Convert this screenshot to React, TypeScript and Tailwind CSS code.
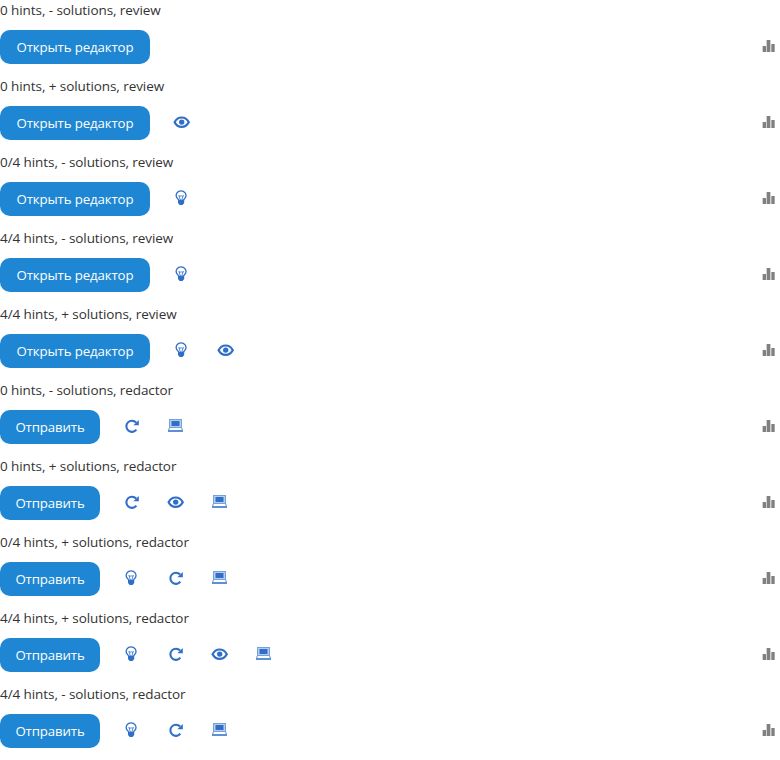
import React from "react";

type Tool = "hint" | "reset" | "solution" | "output";

function HintIcon() {
  return (
    <svg width="20" height="20" viewBox="0 0 20 20" fill="none" stroke="#306fc7">
      <path d="M6.8 11.2L4.5 8.2C3.3 5.2 5.4 1.8 9 1.8s5.9 3.4 4.7 6.4L11.4 11.2" strokeWidth="1.3" />
      <path d="M6.8 6l1.6 5M11.4 6l-1.6 5M7 6.8l1.1.6 1-.8 1 .8 1.1-.6" strokeWidth="0.8" />
      <path d="M6 10.8h6.2v3.2L10.5 16H7.7L6 14z" fill="#306fc7" stroke="none" />
    </svg>
  );
}

function SolutionIcon() {
  return (
    <svg width="20" height="20" viewBox="0 0 20 20" fill="none" stroke="#306fc7">
      <path d="M2.6 9.2C5.8 2.9 13.4 2.9 16.8 9.2C13.4 15.4 5.8 15.4 2.6 9.2z" strokeWidth="2.2" />
      <circle cx="9.7" cy="9.1" r="2.7" fill="#306fc7" stroke="none" />
    </svg>
  );
}

function ResetIcon() {
  return (
    <svg width="20" height="20" viewBox="0 0 20 20" fill="none" stroke="#306fc7">
      <path d="M14.4 12.7a5.6 5.6 0 1 1-.3-7.2" strokeWidth="2.1" />
      <path d="M16.8 3v5.2h-5.4z" fill="#306fc7" stroke="none" />
    </svg>
  );
}

function OutputIcon() {
  return (
    <svg width="20" height="20" viewBox="0 0 20 20" fill="none">
      <path d="M3 2h13v9H3z" fill="#74a0dc" />
      <path d="M4 3h11v7H4z" fill="#b5cdee" />
      <path d="M5.5 4h8v5h-8z" fill="#306fc7" />
      <path d="M3.3 11L2.3 14M15.7 11l1 3" stroke="#5d90d5" />
      <path d="M2 13h15v2H2z" fill="#5d90d5" />
    </svg>
  );
}

function StatsIcon() {
  return (
    <svg width="20" height="20" viewBox="0 0 20 20">
      <path d="M2 9h4v6H2zM6 3h5v12H6zM11 7h4v8h-4z" fill="#d0d0d0" />
      <path d="M3 9h3v6H3zM7 3h3v12H7zM11.5 7h3v8h-3z" fill="#808080" />
    </svg>
  );
}

const icons = { hint: HintIcon, reset: ResetIcon, solution: SolutionIcon, output: OutputIcon };

const rows: { label: string; review: boolean; tools: Tool[] }[] = [
  { label: "0 hints, - solutions, review", review: true, tools: [] },
  { label: "0 hints, + solutions, review", review: true, tools: ["solution"] },
  { label: "0/4 hints, - solutions, review", review: true, tools: ["hint"] },
  { label: "4/4 hints, - solutions, review", review: true, tools: ["hint"] },
  { label: "4/4 hints, + solutions, review", review: true, tools: ["hint", "solution"] },
  { label: "0 hints, - solutions, redactor", review: false, tools: ["reset", "output"] },
  { label: "0 hints, + solutions, redactor", review: false, tools: ["reset", "solution", "output"] },
  { label: "0/4 hints, + solutions, redactor", review: false, tools: ["hint", "reset", "output"] },
  { label: "4/4 hints, + solutions, redactor", review: false, tools: ["hint", "reset", "solution", "output"] },
  { label: "4/4 hints, - solutions, redactor", review: false, tools: ["hint", "reset", "output"] },
];

export default function App() {
  return (
    <main className="h-[760px] w-[780px] overflow-hidden bg-white font-['Open_Sans','Noto_Sans',sans-serif] text-[13.5px] leading-[21px] tracking-[-0.08px] text-[#333333]">
      {rows.map((row) => (
        <section key={row.label} className="h-[76px]">
          <p className="mb-[9px] h-[21px] whitespace-nowrap">{row.label}</p>
          <div className="flex h-[34px] items-center">
            <button
              className={`mr-2.5 h-[34px] shrink-0 rounded-[10px] bg-[#1e86d2] text-[13.25px] tracking-[-0.12px] whitespace-nowrap text-white ${row.review ? "w-[150px]" : "w-[100px]"}`}
            >
              {row.review ? "Открыть редактор" : "Отправить"}
            </button>
            {row.tools.map((tool) => {
              const Icon = icons[tool];
              return (
                <button key={tool} className="flex w-11 justify-center">
                  <Icon />
                </button>
              );
            })}
            <button className="ml-auto">
              <StatsIcon />
            </button>
          </div>
        </section>
      ))}
    </main>
  );
}
